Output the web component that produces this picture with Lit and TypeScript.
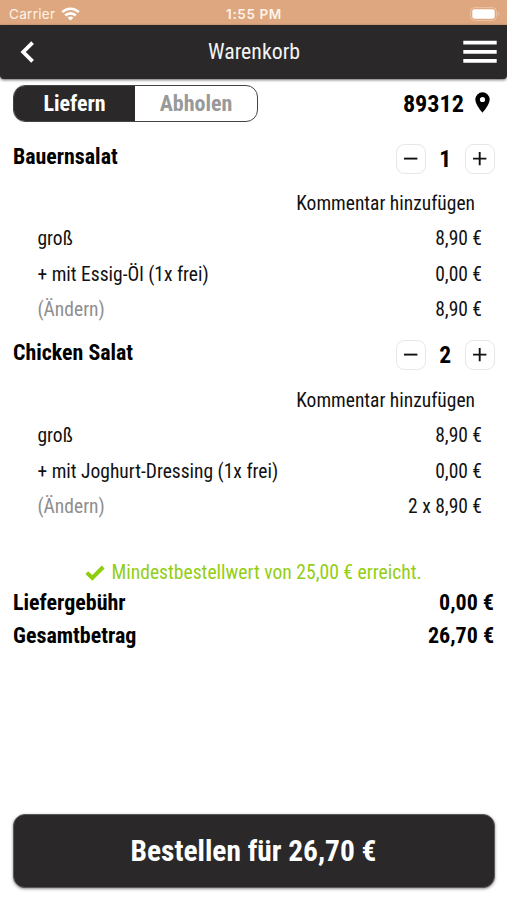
import { LitElement, html, css } from "lit";
import { customElement, property } from "lit/decorators.js";

interface Line {
  label: string;
  price: string;
  muted?: boolean;
}

interface CartItem {
  name: string;
  count: number;
  lines: Line[];
}

const ITEMS: CartItem[] = [
  {
    name: "Bauernsalat",
    count: 1,
    lines: [
      { label: "groß", price: "8,90 €" },
      { label: "+ mit Essig-Öl (1x frei)", price: "0,00 €" },
      { label: "(Ändern)", price: "8,90 €", muted: true },
    ],
  },
  {
    name: "Chicken Salat",
    count: 2,
    lines: [
      { label: "groß", price: "8,90 €" },
      { label: "+ mit Joghurt-Dressing (1x frei)", price: "0,00 €" },
      { label: "(Ändern)", price: "2 x 8,90 €", muted: true },
    ],
  },
];

@customElement("cart-item")
export class CartItemRow extends LitElement {
  @property({ attribute: false }) item!: CartItem;

  static styles = css`
    :host {
      display: block;
      height: 196.7px;
    }
    .head {
      display: flex;
      justify-content: space-between;
      height: 54.5px;
      padding: 12.5px 12.5px 0 13px;
      box-sizing: border-box;
    }
    .name {
      font-weight: 700;
      font-size: 21.9px;
      line-height: 26px;
    }
    .stepper {
      display: flex;
      height: 30px;
      align-items: center;
    }
    .btn {
      display: block;
      width: 30px;
      height: 30px;
      box-sizing: border-box;
      padding: 0;
      border: 1px solid #e6e6e6;
      border-radius: 8.5px;
      background: #fff;
    }
    .btn svg {
      display: block;
      width: 28px;
      height: 28px;
    }
    .count {
      width: 38.5px;
      text-align: center;
      font-weight: 700;
      font-size: 23.5px;
      line-height: 30px;
    }
    .row {
      display: flex;
      justify-content: space-between;
      align-items: center;
      height: 35.5px;
      padding: 1.4px 25px 0 37.5px;
      box-sizing: border-box;
      font-size: 19.5px;
      line-height: 24px;
      color: #111;
    }
    .comment {
      justify-content: flex-end;
      padding-right: 32px;
    }
    .muted {
      color: #8e8e8e;
    }
  `;

  render() {
    const { name, count, lines } = this.item;
    return html`
      <div class="head">
        <div class="name">${name}</div>
        <div class="stepper">
          <button class="btn" aria-label="Weniger">
            <svg viewBox="0 0 28 28"><path d="M7 13.6h13.4" stroke="#111" stroke-width="1.9" /></svg>
          </button>
          <div class="count">${count}</div>
          <button class="btn" aria-label="Mehr">
            <svg viewBox="0 0 28 28"><path d="M7 13.6h13.4M13.7 7v13.2" stroke="#111" stroke-width="1.9" /></svg>
          </button>
        </div>
      </div>
      <div class="row comment">Kommentar hinzufügen</div>
      ${lines.map(
        (l) => html`<div class="row">
          <span class=${l.muted ? "muted" : ""}>${l.label}</span><span>${l.price}</span>
        </div>`
      )}
    `;
  }
}

@customElement("app-root")
export class AppRoot extends LitElement {
  static styles = css`
    :host {
      display: flex;
      flex-direction: column;
      height: 900px;
      overflow: hidden;
      background: #fff;
      color: #000;
      font-family: "Roboto Condensed", Roboto, "Liberation Sans", sans-serif;
      font-stretch: 75%;
    }
    .status {
      display: grid;
      grid-template-columns: 1fr auto 1fr;
      align-items: center;
      height: 25px;
      padding: 2px 7px 0 9px;
      box-sizing: border-box;
      background: #dea77f;
      color: #fff3ea;
      font-family: Inter, "Liberation Sans", sans-serif;
      font-stretch: 100%;
      font-size: 13.5px;
      line-height: 18px;
      flex: none;
    }
    .carrier {
      display: flex;
      align-items: center;
      gap: 6px;
      letter-spacing: 0.3px;
    }
    .clock {
      font-weight: 600;
      font-size: 13.5px;
      letter-spacing: 0.6px;
      margin-right: 1px;
    }
    .battery {
      justify-self: end;
      display: block;
    }
    .bar {
      display: grid;
      grid-template-columns: 1fr auto 1fr;
      align-items: center;
      height: 54px;
      padding: 0 10px 0 20px;
      box-sizing: border-box;
      background: #2a2829;
      border-radius: 0 0 4px 4px;
      box-shadow: 0 1px 3px rgba(0, 0, 0, 0.6);
      color: #f4f4f4;
      flex: none;
    }
    .bar svg,
    .place svg,
    .ok svg {
      display: block;
    }
    .title {
      font-size: 21.8px;
      line-height: 28px;
      margin-right: 9px;
    }
    .menu {
      justify-self: end;
    }
    .top {
      display: flex;
      justify-content: space-between;
      align-items: center;
      height: 52px;
      padding: 6px 17px 9px 13px;
      box-sizing: border-box;
      flex: none;
    }
    .toggle {
      display: flex;
      width: 245px;
      height: 37px;
      box-sizing: border-box;
      border: 1px solid #444;
      border-radius: 12px;
      overflow: hidden;
      font-weight: 700;
      font-size: 22px;
      line-height: 36px;
      text-align: center;
    }
    .on {
      width: 121px;
      background: #2a2829;
      color: #fff;
    }
    .off {
      flex: 1;
      color: #999;
    }
    .place {
      display: flex;
      align-items: center;
      gap: 11px;
      font-weight: 700;
      font-size: 24.2px;
      line-height: 28px;
    }
    .place svg {
      margin-bottom: 2px;
    }
    .ok {
      display: flex;
      align-items: center;
      justify-content: center;
      gap: 6px;
      height: 28px;
      margin-top: 35px;
      margin-bottom: -0.4px;
      color: #93ce14;
      font-size: 19.6px;
      line-height: 24px;
    }
    .sum {
      display: flex;
      justify-content: space-between;
      align-items: center;
      height: 33px;
      padding: 0 13px;
      font-weight: 700;
      font-size: 22px;
      line-height: 26px;
    }
    .order {
      margin: auto 12.5px 12px;
      height: 74px;
      border: 1px solid #5a5a5a;
      box-sizing: border-box;
      border-radius: 12px;
      background: #2a2829;
      color: #fff;
      box-shadow: 0 1px 3px rgba(0, 0, 0, 0.45);
      font-family: inherit;
      font-stretch: inherit;
      font-weight: 700;
      font-size: 29.4px;
      line-height: 36px;
    }
  `;

  render() {
    return html`
      <div class="status">
        <div class="carrier">
          <span>Carrier</span>
          <svg width="19" height="14" viewBox="0 0 19 14" fill="none" stroke="#fff" stroke-width="2.6">
            <path d="M1.2 5.2a11.8 11.8 0 0 1 16.6 0" />
            <path d="M4.2 8.5a7.6 7.6 0 0 1 10.6 0" />
            <path d="M9.5 13.6 6.6 10.8a4.2 4.2 0 0 1 5.8 0z" fill="#fff" stroke="none" />
          </svg>
        </div>
        <div class="clock">1:55 PM</div>
        <svg class="battery" width="30" height="14" viewBox="0 0 30 14">
          <rect x="0.6" y="0.6" width="25.8" height="12.8" rx="3.8" fill="none" stroke="#ebc3a5" />
          <rect x="2.3" y="2.3" width="22.4" height="9.4" rx="2.2" fill="#fff" />
          <path d="M27.8 5v4q1.3-.6 1.3-2t-1.3-2z" fill="#ebc3a5" />
        </svg>
      </div>
      <div class="bar">
        <svg width="15" height="22" viewBox="0 0 15 22">
          <path d="M12.6 1.6 3.2 11l9.4 9.4" fill="none" stroke="#fff" stroke-width="3.8" />
        </svg>
        <div class="title">Warenkorb</div>
        <svg class="menu" width="34" height="24" viewBox="0 0 34 24">
          <path d="M0.3 2.7h33.4M0.3 11.8h33.4M0.3 20.9h33.4" stroke="#fff" stroke-width="3.8" />
        </svg>
      </div>
      <div class="top">
        <div class="toggle">
          <div class="on">Liefern</div>
          <div class="off">Abholen</div>
        </div>
        <div class="place">
          <span>89312</span>
          <svg width="15" height="21" viewBox="0 0 15 21">
            <path
              fill-rule="evenodd"
              d="M7.5 0.3A7.2 7.2 0 0 0 .3 7.5c0 5.2 7.2 13.2 7.2 13.2s7.2-8 7.2-13.2A7.2 7.2 0 0 0 7.5.3zm0 4.6a2.6 2.6 0 1 1 0 5.2 2.6 2.6 0 0 1 0-5.2z"
            />
          </svg>
        </div>
      </div>
      ${ITEMS.map((i) => html`<cart-item .item=${i}></cart-item>`)}
      <div class="ok">
        <svg width="20" height="16" viewBox="0 0 20 16">
          <path d="M1.8 7.6 7.3 13 18.2 2" fill="none" stroke="#8fce0a" stroke-width="4" />
        </svg>
        <span>Mindestbestellwert von 25,00 € erreicht.</span>
      </div>
      <div class="sum"><span>Liefergebühr</span><span>0,00 €</span></div>
      <div class="sum"><span>Gesamtbetrag</span><span>26,70 €</span></div>
      <button class="order">Bestellen für 26,70 €</button>
    `;
  }
}
